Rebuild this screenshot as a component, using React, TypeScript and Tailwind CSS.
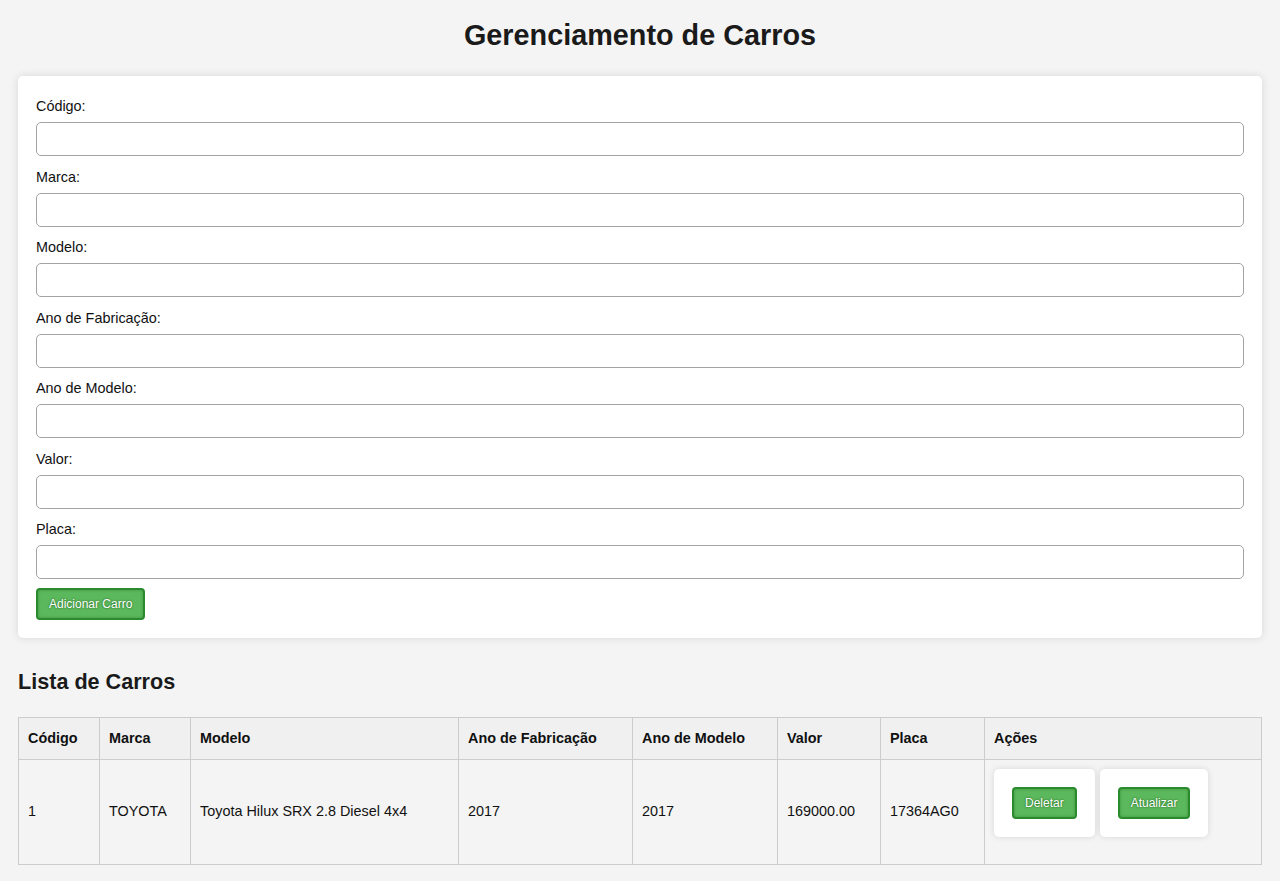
const campos = [
  "Código:",
  "Marca:",
  "Modelo:",
  "Ano de Fabricação:",
  "Ano de Modelo:",
  "Valor:",
  "Placa:",
]

const colunas = [
  { titulo: "Código", w: "w-[81px]" },
  { titulo: "Marca", w: "w-[91px]" },
  { titulo: "Modelo", w: "w-[268px]" },
  { titulo: "Ano de Fabricação", w: "w-[174px]" },
  { titulo: "Ano de Modelo", w: "w-[145px]" },
  { titulo: "Valor", w: "w-[103px]" },
  { titulo: "Placa", w: "w-[104px]" },
  { titulo: "Ações", w: "" },
]

const carros = [
  {
    codigo: "1",
    marca: "TOYOTA",
    modelo: "Toyota Hilux SRX 2.8 Diesel 4x4",
    anoFabricacao: "2017",
    anoModelo: "2017",
    valor: "169000.00",
    placa: "17364AG0",
  },
]

function BotaoVerde({ children }: { children: React.ReactNode }) {
  return (
    <button className="rounded-[4px] border-2 border-[#2a8a2e] bg-[#5cb85c] px-[11px] py-[7px] text-[12px] leading-[14px] text-white [text-shadow:0_0_2px_rgba(0,60,0,0.8)] shadow-[inset_0_0_3px_rgba(0,80,0,0.35)]">
      {children}
    </button>
  )
}

export default function App() {
  return (
    <div className="min-h-screen bg-[#f4f4f4] px-[18px] pb-[16px] font-['Liberation_Sans',Arial,sans-serif] text-[14.4px] text-[#111]">
      <h1 className="pt-[19px] pb-[25px] text-center text-[28.8px] font-bold leading-[32px] text-[#1a1a1a]">
        Gerenciamento de Carros
      </h1>

      {/* formulário */}
      <div className="rounded-[5px] bg-white px-[18px] pt-[22px] pb-[18px] shadow-[0_0_8px_rgba(0,0,0,0.12)]">
        {campos.map((campo, i) => (
          <div key={campo} className={i < campos.length - 1 ? "mb-[12.5px]" : "mb-[9px]"}>
            <label className="mb-[8px] block leading-[16px]">{campo}</label>
            <input
              type="text"
              className="block h-[34px] w-full rounded-[5px] border border-[#a3a3a3] bg-white px-2 outline-none"
            />
          </div>
        ))}
        <BotaoVerde>Adicionar Carro</BotaoVerde>
      </div>

      <h2 className="mt-[32px] mb-[23px] text-[21.6px] font-bold leading-[24px] text-[#1a1a1a]">
        Lista de Carros
      </h2>

      <table className="w-full border-collapse">
        <thead>
          <tr className="bg-[#f0f0f0]">
            {colunas.map((c) => (
              <th
                key={c.titulo}
                className={`${c.w} h-[42px] border border-[#cccccc] px-[9px] text-left font-bold text-[#111]`}
              >
                {c.titulo}
              </th>
            ))}
          </tr>
        </thead>
        <tbody>
          {carros.map((carro) => (
            <tr key={carro.codigo}>
              <td className="border border-[#cccccc] px-[9px]">{carro.codigo}</td>
              <td className="border border-[#cccccc] px-[9px]">{carro.marca}</td>
              <td className="border border-[#cccccc] px-[9px]">{carro.modelo}</td>
              <td className="border border-[#cccccc] px-[9px]">{carro.anoFabricacao}</td>
              <td className="border border-[#cccccc] px-[9px]">{carro.anoModelo}</td>
              <td className="border border-[#cccccc] px-[9px]">{carro.valor}</td>
              <td className="border border-[#cccccc] px-[9px]">{carro.placa}</td>
              <td className="border border-[#cccccc] px-[9px] pt-[9px] pb-[27px] align-top">
                <div className="flex gap-[5px]">
                  <div className="rounded-[5px] bg-white p-[18px] shadow-[0_0_6px_rgba(0,0,0,0.12)]">
                    <BotaoVerde>Deletar</BotaoVerde>
                  </div>
                  <div className="rounded-[5px] bg-white p-[18px] shadow-[0_0_6px_rgba(0,0,0,0.12)]">
                    <BotaoVerde>Atualizar</BotaoVerde>
                  </div>
                </div>
              </td>
            </tr>
          ))}
        </tbody>
      </table>
    </div>
  )
}
